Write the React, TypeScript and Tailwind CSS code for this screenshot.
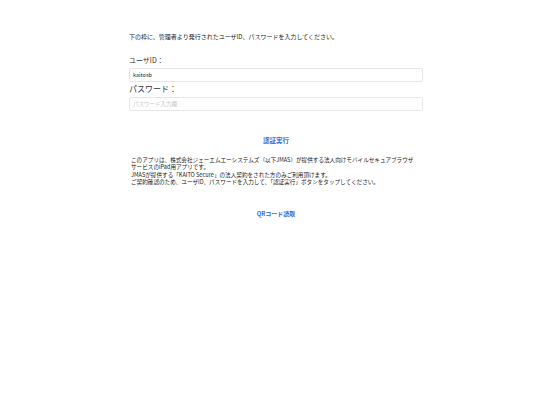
export default function App() {
  return (
    <div className="w-[552px] h-[414px] bg-white" style={{ fontFamily: '"Noto Sans CJK JP", "Liberation Sans", sans-serif' }}>
      <div className="w-[294px] mx-auto pt-[33px] flex flex-col">
        <p className="text-[6px] leading-[8px] text-[#222]">下の枠に、管理者より発行されたユーザID、パスワードを入力してください。</p>
        <label className="mt-[15px] text-[7px] leading-[9px] text-[#333]">ユーザID：</label>
        <div className="mt-[3px] h-[14px] border border-[#e6e6e6] rounded-[2px] flex items-center px-[3px] text-[5.5px] text-[#222]">kaitosb</div>
        <label className="mt-[2px] text-[8px] leading-[10px] text-[#333]">パスワード：</label>
        <div className="mt-[3px] h-[14px] border border-[#e6e6e6] rounded-[2px] flex items-center px-[3px] text-[5.5px] text-[#c4c4c4]">パスワード入力欄</div>
        <div className="mt-[25px] text-center text-[6.5px] leading-[9px] font-bold text-[#2f6fe0]">認証実行</div>
        <div className="mt-[12px] pl-[2px] text-[5.6px] leading-[7px] text-[#222] flex flex-col gap-[0.3px]">
          <p className="leading-[7px]">このアプリは、株式会社ジェーエムエーシステムズ（以下JMAS）が提供する法人向けモバイルセキュアブラウザ</p>
          <p className="leading-[7px]">サービスのiPad用アプリです。</p>
          <p className="leading-[7px]">JMASが提供する「KAITO Secure」の法人契約をされた方のみご利用頂けます。</p>
          <p className="leading-[7px]">ご契約確認のため、ユーザID、パスワードを入力して、「認証実行」ボタンをタップしてください。</p>
        </div>
        <div className="mt-[24px] text-center text-[6px] leading-[8px] font-bold text-[#2f6fe0]">QRコード読取</div>
      </div>
    </div>
  );
}
